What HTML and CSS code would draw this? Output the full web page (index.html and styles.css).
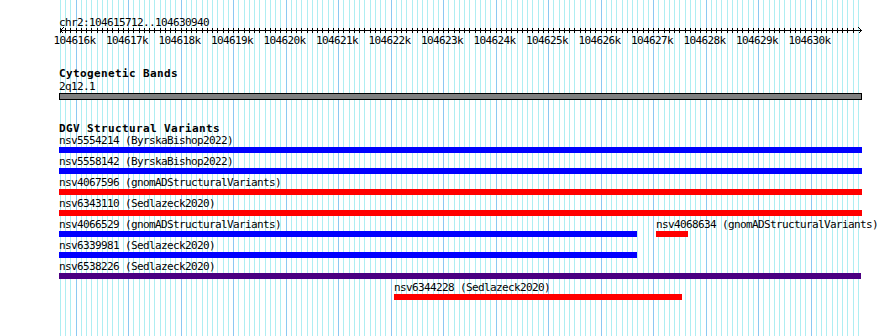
FILE: index.html
```html
<!DOCTYPE html>
<html lang="en">
<head>
<meta charset="utf-8">
<title>chr2:104615712..104630940</title>
<link rel="stylesheet" href="styles.css">
</head>
<body>
<div class="panel">
  <div class="chrom">chr2:104615712..104630940</div>
  <svg class="axis" width="803" height="7" viewBox="0 0 803 7" shape-rendering="crispEdges">
    <defs>
      <pattern id="tk" x="1" y="0" width="21" height="7" patternUnits="userSpaceOnUse">
        <rect x="0" y="1" width="1" height="5" fill="#000"/>
        <rect x="5" y="1" width="1" height="5" fill="#000"/>
        <rect x="10" y="1" width="1" height="5" fill="#000"/>
        <rect x="16" y="1" width="1" height="5" fill="#000"/>
      </pattern>
    </defs>
    <rect x="1" y="0" width="796" height="7" fill="url(#tk)"/>
    <rect x="1" y="3" width="802" height="1" fill="#000"/>
    <polyline points="4.5,0.5 1.5,3.5 4.5,6.5" fill="none" stroke="#000" stroke-width="1"/>
    <polyline points="799.5,0.5 802.5,3.5 799.5,6.5" fill="none" stroke="#000" stroke-width="1"/>
  </svg>
  <div class="scale">
    <span>104616k</span><span>104617k</span><span>104618k</span><span>104619k</span><span>104620k</span><span>104621k</span><span>104622k</span><span>104623k</span><span>104624k</span><span>104625k</span><span>104626k</span><span>104627k</span><span>104628k</span><span>104629k</span><span>104630k</span>
  </div>

  <section class="track cyto">
    <h2 class="track-title">Cytogenetic Bands</h2>
    <div class="band-label">2q12.1</div>
    <div class="band"></div>
  </section>

  <section class="track dgv">
    <h2 class="track-title">DGV Structural Variants</h2>
    <div class="lane">
      <div class="feat" style="width:803px"><div class="flabel">nsv5554214 (ByrskaBishop2022)</div><div class="bar blue"></div></div>
    </div>
    <div class="lane">
      <div class="feat" style="width:803px"><div class="flabel">nsv5558142 (ByrskaBishop2022)</div><div class="bar blue"></div></div>
    </div>
    <div class="lane">
      <div class="feat" style="width:803px"><div class="flabel">nsv4067596 (gnomADStructuralVariants)</div><div class="bar red"></div></div>
    </div>
    <div class="lane">
      <div class="feat" style="width:803px"><div class="flabel">nsv6343110 (Sedlazeck2020)</div><div class="bar red"></div></div>
    </div>
    <div class="lane">
      <div class="feat" style="width:578px"><div class="flabel">nsv4066529 (gnomADStructuralVariants)</div><div class="bar blue"></div></div>
      <div class="feat" style="margin-left:19px;width:32px"><div class="flabel">nsv4068634 (gnomADStructuralVariants)</div><div class="bar red"></div></div>
    </div>
    <div class="lane">
      <div class="feat" style="width:578px"><div class="flabel">nsv6339981 (Sedlazeck2020)</div><div class="bar blue"></div></div>
    </div>
    <div class="lane">
      <div class="feat" style="width:802px"><div class="flabel">nsv6538226 (Sedlazeck2020)</div><div class="bar indigo"></div></div>
    </div>
    <div class="lane">
      <div class="feat" style="margin-left:335px;width:288px"><div class="flabel">nsv6344228 (Sedlazeck2020)</div><div class="bar red"></div></div>
    </div>
  </section>
</div>
</body>
</html>
```

FILE: styles.css
```css
html, body {
  margin: 0;
  padding: 0;
  background: #ffffff;
}

.panel {
  margin-left: 59px;
  width: 803px;
  min-height: 336px;
  box-sizing: border-box;
  padding-top: 16px;
  font-family: "DejaVu Sans Mono", "Liberation Mono", monospace;
  font-size: 11px;
  letter-spacing: -0.62px;
  line-height: 13px;
  color: #000;
  background-image:
    linear-gradient(to right, #8cc8f2 0 1px, transparent 1px 52px, #8cc8f2 52px 53px, transparent 53px),
    linear-gradient(to right, #aeeef2 0 1px, transparent 1px 5px, #aeeef2 5px 6px, transparent 6px 10px, #aeeef2 10px 11px, transparent 11px 16px, #aeeef2 16px 17px, transparent 17px);
  background-size: 105px 100%, 21px 100%;
  background-position: 17px 0, 1px 0;
  background-repeat: repeat-x, repeat-x;
}

.chrom {
  height: 13px;
  white-space: nowrap;
}

.axis {
  display: block;
  margin-top: -2px;
}

.scale {
  display: flex;
  margin-left: -10.75px;
  height: 13px;
}

.scale span {
  flex: none;
  width: 52.5px;
  text-align: center;
  white-space: nowrap;
}

.track {
  margin: 0;
}

.track-title {
  margin: 0;
  font-size: 11px;
  font-weight: bold;
  letter-spacing: 0.38px;
  line-height: 13px;
  height: 13px;
  white-space: nowrap;
}

.cyto {
  margin-top: 20px;
}

.band-label {
  height: 13px;
}

.band {
  height: 7px;
  box-sizing: border-box;
  border: 1px solid #000;
  background: #808080;
}

.dgv {
  margin-top: 22px;
}

.lane {
  display: flex;
  margin-top: 3px;
}

.track-title + .lane {
  margin-top: 0;
}

.feat {
  flex: none;
  display: flex;
  flex-direction: column;
}

.flabel {
  height: 12px;
  line-height: 12px;
  white-space: nowrap;
}

.bar {
  height: 6px;
}

.blue { background: #0000ff; }
.red { background: #ff0000; }
.indigo { background: #4b0082; }
```
